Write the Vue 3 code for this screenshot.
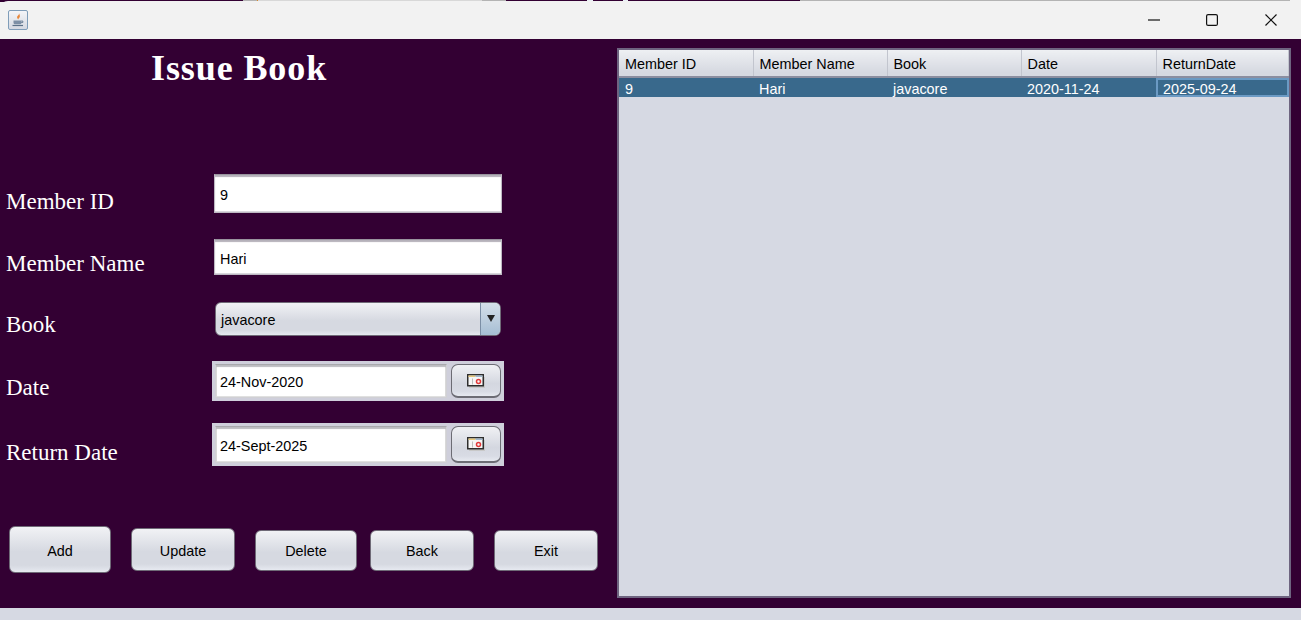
<script setup>
const fields = [
  { key: 'id', label: 'Member ID', value: '9' },
  { key: 'name', label: 'Member Name', value: 'Hari' }
]
const dates = [
  { key: 'date', label: 'Date', value: '24-Nov-2020' },
  { key: 'return', label: 'Return Date', value: '24-Sept-2025' }
]
const buttons = ['Add', 'Update', 'Delete', 'Back', 'Exit']
const columns = ['Member ID', 'Member Name', 'Book', 'Date', 'ReturnDate']
const rows = [['9', 'Hari', 'javacore', '2020-11-24', '2025-09-24']]
</script>

<template>
  <div class="window">
    <div class="desktop-strip">
      <span class="strip strip-dark s1"></span>
      <span class="strip strip-grey s2"></span>
      <span class="strip strip-orange s3"></span>
      <span class="strip strip-light s4"></span>
      <span class="strip strip-grey s5"></span>
      <span class="strip strip-dark s6"></span>
      <span class="strip strip-white s7"></span>
      <span class="strip strip-dark s8"></span>
      <span class="strip strip-white s9"></span>
      <span class="strip strip-dark s10"></span>
      <span class="strip strip-grey s11"></span>
    </div>
    <header class="titlebar">
      <div class="app-icon">
        <svg width="16" height="16" viewBox="0 0 16 16" fill="none">
          <path d="M8.800 1c1.100 1.800-1.900 2.700-1.700 4.500.1.900.7 1.400 1.100 2-.1-1.200 2-1.900 1.700-3.600C9.700 2.900 9.300 1.800 8.800 1z" fill="#e8863a"/>
          <path d="M3.500 8.500h8v2.200c0 1-1 1.600-2 1.600h-4c-1 0-2-.6-2-1.600z" fill="#7d8fa5"/>
          <path d="M11.500 9h1.300v1.500h-1.500" stroke="#6b7f96"/>
          <path d="M2.500 13.500h10.500" stroke="#5b7088" stroke-width="1.200"/>
        </svg>
      </div>
      <div class="win-controls">
        <svg width="12" height="12" viewBox="0 0 12 12"><path d="M0 6h12" stroke="#111" stroke-width="1.200"/></svg>
        <svg width="12" height="12" viewBox="0 0 12 12" fill="none"><rect x=".6" y=".6" width="10.800" height="10.800" rx="1.500" stroke="#111" stroke-width="1.200"/></svg>
        <svg class="close-icon" width="12" height="12" viewBox="0 0 12 12" fill="none"><path d="M.5.500l11 11M11.500.500l-11 11" stroke="#111" stroke-width="1.200"/></svg>
      </div>
    </header>

    <main class="content">
      <section class="form-panel">
        <h1 class="title">Issue Book</h1>

        <div class="form">
          <div v-for="f in fields" :key="f.key" class="row" :class="'row-' + f.key">
            <label class="label">{{ f.label }}</label>
            <div class="text-input">{{ f.value }}</div>
          </div>

          <div class="row row-book">
            <label class="label">Book</label>
            <div class="combo">
              <span class="combo-value">javacore</span>
              <span class="combo-arrow"></span>
            </div>
          </div>

          <div v-for="d in dates" :key="d.key" class="row" :class="'row-' + d.key">
            <label class="label">{{ d.label }}</label>
            <div class="date-chooser">
              <div class="date-input">{{ d.value }}</div>
              <button class="date-btn">
                <svg width="18" height="14" viewBox="0 0 18 14" fill="none">
                  <rect x="2" y="3" width="16" height="11" fill="#c8c8c8"/>
                  <rect x=".75" y=".75" width="15.500" height="11" fill="#f6f6f6" stroke="#2e2e2e" stroke-width="1.500"/>
                  <rect x="1.500" y="1.500" width="7" height="1.500" fill="#e6c77a"/>
                  <rect x="8.500" y="1.500" width="7" height="1.500" fill="#9fb6cc"/>
                  <rect x="5" y="4.500" width="1" height="6" fill="#bdbdbd"/>
                  <circle cx="11.500" cy="7.500" r="2" stroke="#e23a3a" stroke-width="1.500"/>
                </svg>
              </button>
            </div>
          </div>
        </div>

        <div class="actions">
          <button v-for="b in buttons" :key="b" class="action" :class="'action-' + b.toLowerCase()">{{ b }}</button>
        </div>
      </section>

      <section class="table-panel">
        <table class="table">
          <colgroup>
            <col class="col-std" />
            <col class="col-std" />
            <col class="col-std" />
            <col class="col-wide" />
            <col />
          </colgroup>
          <thead>
            <tr>
              <th v-for="c in columns" :key="c">{{ c }}</th>
            </tr>
          </thead>
          <tbody>
            <tr v-for="(r, i) in rows" :key="i">
              <td v-for="(v, j) in r" :key="j" :class="{ focused: j === r.length - 1 }">{{ v }}</td>
            </tr>
          </tbody>
        </table>
      </section>
    </main>
    <div class="bottom-strip"></div>
  </div>
</template>

<style>
html, body {
  margin: 0;
  background: #f2f2f2;
  overflow: hidden;
}
</style>

<style scoped>
.window {
  width: 1301px;
  height: 620px;
  display: flex;
  flex-direction: column;
  font-family: "Liberation Sans", Arial, sans-serif;
  overflow: hidden;
}

.desktop-strip {
  height: 2px;
  display: flex;
}
.strip { display: block; }
.strip-dark { background: #330033; }
.strip-grey { background: #b4b4b4; }
.strip-orange { background: #d98a2b; }
.strip-light { background: #d8d8d8; }
.strip-white { background: #e8eef4; }
.s1 { width: 243px; }
.s2 { width: 14px; }
.s3 { width: 1px; }
.s4 { width: 224px; }
.s5 { width: 24px; }
.s6 { width: 81px; }
.s7 { width: 6px; }
.s8 { width: 30px; }
.s9 { width: 5px; }
.s10 { width: 172px; }
.s11 { width: 490px; }

.titlebar {
  height: 37px;
  background: #f2f2f2;
  border-radius: 8px 8px 0 0;
  margin-top: -1px;
  padding-bottom: 1px;
  display: flex;
  align-items: center;
  justify-content: space-between;
  padding-left: 8px;
  box-sizing: content-box;
}

.app-icon {
  width: 18px;
  height: 18px;
  border: 1px solid #7f9db9;
  border-radius: 2px;
  background: linear-gradient(#f4f5f8, #d5d9e2);
  display: flex;
  align-items: center;
  justify-content: center;
}

.win-controls {
  display: flex;
  gap: 46px;
  padding-right: 24px;
}
.close-icon { margin-left: 1px; }

.content {
  flex: 1;
  min-height: 0;
  background: #330033;
  display: flex;
}

.form-panel {
  width: 617px;
  display: flex;
  flex-direction: column;
}

.title {
  margin: 8px 0 0 151px;
  font-family: "Liberation Serif", "Times New Roman", serif;
  font-size: 36px;
  line-height: 42px;
  font-weight: 700;
  letter-spacing: 0.9px;
  color: #fff;
  white-space: nowrap;
}

.form {
  margin-top: 85px;
  display: flex;
  flex-direction: column;
}

.row {
  display: flex;
  align-items: flex-start;
  padding-left: 6px;
}
.label {
  width: 206px;
  font-family: "Liberation Serif", "Times New Roman", serif;
  font-size: 23px;
  line-height: 28px;
  color: #fff;
  white-space: nowrap;
}
.text-input {
  width: 288px;
  margin-left: 2px;
  box-sizing: border-box;
  background: #fff;
  border: 1px solid #bdb8c2;
  border-top: 1px solid #99949e;
  box-shadow: inset 0 2px 1px #b5b1ba, inset 0 -1px 0 #d8d6dc;
  padding: 2px 0 0 5px;
  font-size: 14.4px;
  color: #000;
  display: flex;
  align-items: center;
}

.row-id { height: 39px; }
.row-id .text-input { height: 39px; }
.row-id .label { margin-top: 14px; }
.row-name { height: 36px; margin-top: 26px; }
.row-name .text-input { height: 36px; padding-top: 4px; }
.row-name .label { margin-top: 11px; }
.row-book { height: 34px; margin-top: 27px; }
.row-book .label { margin-top: 9px; }
.row-date { height: 40px; margin-top: 25px; }
.row-date .label { margin-top: 13px; }
.row-date .date-input { padding-top: 2px; }
.row-return { height: 43px; margin-top: 22px; }
.row-return .label { margin-top: 16px; }
.row-return .date-input { padding-top: 2px; }

.combo {
  width: 286px;
  height: 34px;
  margin-left: 3px;
  box-sizing: border-box;
  border: 1px solid #6f6a77;
  border-radius: 6px;
  background: linear-gradient(#f1f2f5, #d6d9e1 55%, #d6d9e1 85%, #e6e9f0);
  display: flex;
  align-items: stretch;
  justify-content: space-between;
  overflow: hidden;
}
.combo-value {
  align-self: center;
  padding: 2px 0 0 5px;
  font-size: 14.4px;
  color: #000;
}
.combo-arrow {
  width: 19px;
  border-left: 1px solid #7b8ea5;
  background: linear-gradient(#d5dfe9, #a6bed4);
  position: relative;
}
.combo-arrow::after {
  content: "";
  position: absolute;
  left: 6px;
  top: 12px;
  border-left: 4px solid transparent;
  border-right: 4px solid transparent;
  border-top: 7px solid #222;
}

.date-chooser {
  width: 292px;
  height: 100%;
  box-sizing: border-box;
  background: #cfcfdb;
  display: flex;
  align-items: stretch;
  gap: 4px;
  padding: 3px;
}
.date-input {
  width: 232px;
  box-sizing: border-box;
  background: #fff;
  border: 1px solid #d0d0d4;
  border-top: 1px solid #a8a8ac;
  box-shadow: inset 0 2px 1px #bcbcc0, inset 1px 0 0 #dcdcdc, inset -1px 0 0 #dcdcdc, inset 0 -1px 0 #e0e0e0;
  padding-left: 4px;
  font-size: 14.4px;
  color: #000;
  display: flex;
  align-items: center;
}
.date-btn {
  flex: 1;
  margin: 0;
  padding: 0;
  border: 1px solid #6c6c74;
  border-bottom-width: 2px;
  border-radius: 7px;
  background: linear-gradient(#f0f1f4, #d4d7e0 60%, #d8dbe4 85%, #e6e9f0);
  display: flex;
  align-items: center;
  justify-content: center;
}

.actions {
  margin-top: 60px;
  display: flex;
  align-items: flex-start;
  padding-left: 9px;
}
.action {
  height: 41px;
  width: 104px;
  margin: 4px 0 0 20px;
  padding: 0;
  box-sizing: border-box;
  border: 1px solid #6f6a77;
  border-radius: 6px;
  background: linear-gradient(#f1f2f5, #d6d9e1 55%, #d6d9e1 85%, #e6e9f0);
  font-family: "Liberation Sans", Arial, sans-serif;
  font-size: 14.4px;
  color: #000;
}
.action-add { width: 102px; height: 47px; margin: 0; padding-top: 2px; }
.action-update { height: 43px; margin-top: 2px; padding-top: 2px; }
.action-delete { width: 102px; }
.action-back { margin-left: 13px; }

.table-panel {
  width: 674px;
  height: 550px;
  margin-top: 9px;
  box-sizing: border-box;
  border: 2px solid #6e6480;
  background: #d6d9e3;
}
.table {
  width: 670px;
  border-collapse: collapse;
  table-layout: fixed;
  font-size: 14.4px;
}
.col-std { width: 134px; }
.col-wide { width: 135px; }
.table th {
  height: 27px;
  padding: 2px 0 0 6px;
  box-sizing: border-box;
  text-align: left;
  font-weight: 400;
  color: #000;
  background: linear-gradient(#eef0f3, #d6d9e1 85%);
  border-right: 1px solid #c2c5ce;
  border-bottom: 2px solid #8b8ea0;
}
.table td {
  height: 20px;
  padding: 2px 0 0 6px;
  box-sizing: border-box;
  background: #39698c;
  color: #fff;
}
.table td.focused {
  padding-left: 7px;
  box-shadow: inset 0 0 0 2px #6b9ac4;
}
.bottom-strip {
  height: 12px;
  background: #d6d9e3;
}
</style>
